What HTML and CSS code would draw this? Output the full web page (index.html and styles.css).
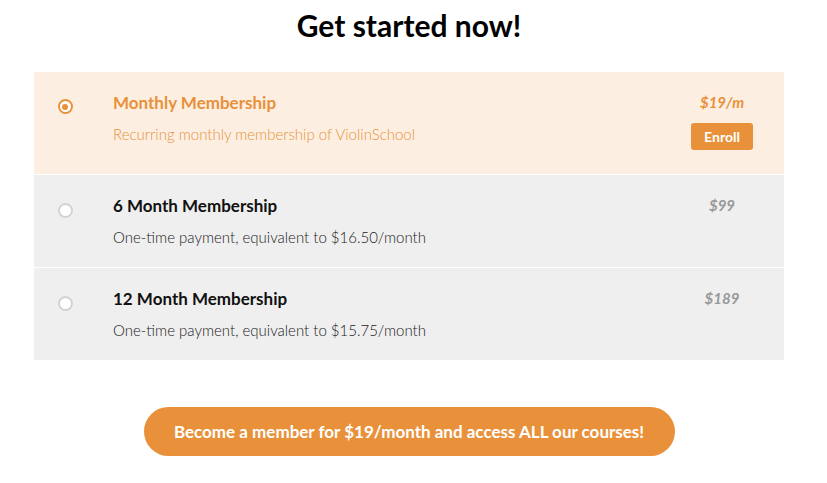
FILE: index.html
```html
<!DOCTYPE html>
<html>
<head>
<meta charset="utf-8">
<link rel="stylesheet" href="styles.css">
</head>
<body>
<div class="page">
  <h1 class="title">Get started now!</h1>
  <div class="plans">
    <div class="plan active">
      <div class="cell radio-cell"><span class="radio checked"></span></div>
      <div class="cell info">
        <div class="name">Monthly Membership</div>
        <div class="desc">Recurring monthly membership of ViolinSchool</div>
      </div>
      <div class="cell price-cell">
        <div class="price">$19/m</div>
        <button class="enroll">Enroll</button>
      </div>
    </div>
    <div class="plan">
      <div class="cell radio-cell"><span class="radio"></span></div>
      <div class="cell info">
        <div class="name">6 Month Membership</div>
        <div class="desc">One-time payment, equivalent to $16.50/month</div>
      </div>
      <div class="cell price-cell">
        <div class="price">$99</div>
      </div>
    </div>
    <div class="plan">
      <div class="cell radio-cell"><span class="radio"></span></div>
      <div class="cell info">
        <div class="name">12 Month Membership</div>
        <div class="desc">One-time payment, equivalent to $15.75/month</div>
      </div>
      <div class="cell price-cell">
        <div class="price">$189</div>
      </div>
    </div>
  </div>
  <div class="cta-wrap">
    <button class="cta">Become a member for $19/month and access ALL our courses!</button>
  </div>
</div>
</body>
</html>
```
FILE: styles.css
```css
* { box-sizing: border-box; }
body {
  margin: 0;
  background: #fff;
  font-family: Lato, "Open Sans", sans-serif;
  color: #111;
}
.page {
  width: 827px;
  padding: 0 43px 0 34px;
}
.title {
  margin: 0;
  padding-top: 7px;
  height: 72px;
  text-align: center;
  font-size: 30px;
  font-weight: 700;
  line-height: 36px;
  color: #000;
}
.plans {
  display: flex;
  flex-direction: column;
  gap: 1px;
  background: #fff;
}
.plan {
  display: grid;
  grid-template-columns: 62px 561px 126px;
  gap: 1px;
  background: #efefef;
  min-height: 92px;
}
.plan.active { background: #fcefe2; min-height: 102px; }
.cell { padding-top: 22px; }
.radio-cell { display: flex; justify-content: center; padding-top: 28px; }
.plan.active .radio-cell { padding-top: 27px; }
.radio {
  width: 15px;
  height: 15px;
  border-radius: 50%;
  border: 2px solid #d3d3d3;
  background: #fff;
  display: block;
}
.radio.checked {
  border: 2px solid #e8913a;
  position: relative;
}
.radio.checked::after {
  content: "";
  position: absolute;
  left: 2.5px;
  top: 2.5px;
  width: 6px;
  height: 6px;
  border-radius: 50%;
  background: #e8913a;
}
.info { padding-left: 16px; }
.name {
  font-size: 17px;
  font-weight: 700;
  line-height: 18px;
  color: #111;
}
.desc {
  margin-top: 14px;
  font-size: 15px;
  font-weight: 300;
  line-height: 17px;
  color: #222;
}
.plan.active .name { color: #e8913a; }
.plan.active .desc { color: #e8913a; }
.price-cell { display: flex; flex-direction: column; align-items: center; padding-top: 21px; }
.price {
  font-size: 15px;
  font-weight: 700;
  font-style: italic;
  color: #999;
  line-height: 18px;
}
.plan.active .price { color: #e8913a; }
.enroll {
  margin-top: 12px;
  width: 62px;
  height: 27px;
  border: 0;
  border-radius: 3px;
  background: #e8913a;
  color: #fff;
  font-family: Lato, sans-serif;
  font-weight: 700;
  font-size: 14px;
  padding: 0;
}
.cta-wrap {
  display: flex;
  justify-content: center;
  padding-top: 47px;
}
.cta {
  width: 531px;
  height: 49px;
  border: 0;
  border-radius: 25px;
  background: #e8913a;
  color: #fff;
  font-family: Lato, sans-serif;
  font-weight: 700;
  font-size: 17px;
  padding: 0;
}
```
